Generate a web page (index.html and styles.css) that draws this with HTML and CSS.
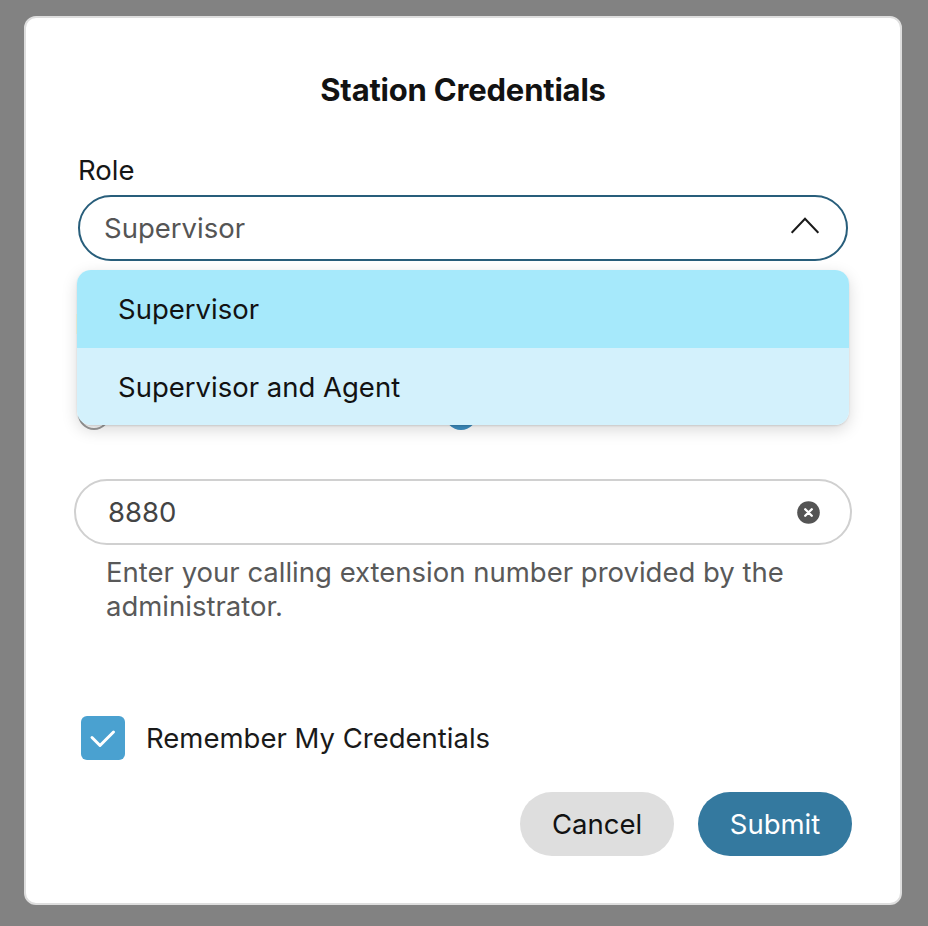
FILE: index.html
```html
<!DOCTYPE html>
<html lang="en">
<head>
<meta charset="utf-8">
<title>Station Credentials</title>
<link rel="stylesheet" href="styles.css">
</head>
<body>
<div class="dialog">
  <h1 class="title">Station Credentials</h1>

  <div class="field role-field">
    <div class="label">Role</div>
    <div class="select">
      <span class="select-value">Supervisor</span>
      <svg class="chevron" width="28" height="17" viewBox="0 0 28 17"><path d="M0.7 15.8 L14 1.8 L27.3 15.8" fill="none" stroke="#1a1a1a" stroke-width="2"/></svg>
    </div>
    <ul class="menu">
      <li class="menu-item active">Supervisor</li>
      <li class="menu-item">Supervisor and Agent</li>
    </ul>
  </div>

  <div class="label second-label">Login Option</div>
  <div class="radios">
    <label class="radio"><span class="radio-dot"></span><span class="radio-text">Dial Number</span></label>
    <label class="radio"><span class="radio-dot checked"></span><span class="radio-text">Extension</span></label>
  </div>

  <div class="input">
    <span class="input-value">8880</span>
    <svg class="clear" width="23" height="23" viewBox="0 0 24 24"><circle cx="12" cy="12" r="11.8" fill="#545454"/><path d="M8.6 8.6 L15.4 15.4 M15.4 8.6 L8.6 15.4" stroke="#fff" stroke-width="2.5" stroke-linecap="round"/></svg>
  </div>
  <p class="helper">Enter your calling extension number provided by the administrator.</p>

  <div class="remember">
    <span class="checkbox"><svg width="44" height="44" viewBox="0 0 44 44"><path d="M11 21.5 L19 29.5 L32.5 16" fill="none" stroke="#fff" stroke-width="3" stroke-linecap="round" stroke-linejoin="round"/></svg></span>
    <span class="remember-text">Remember My Credentials</span>
  </div>

  <div class="actions">
    <button class="btn cancel">Cancel</button>
    <button class="btn submit">Submit</button>
  </div>
</div>
</body>
</html>
```

FILE: styles.css
```css
* { box-sizing: border-box; }
html, body { margin: 0; padding: 0; }
body {
  background: #828282;
  font-family: Inter, "Liberation Sans", Arial, sans-serif;
  width: 928px;
  height: 926px;
  overflow: hidden;
}
.dialog {
  margin: 16px 0 0 24px;
  width: 878px;
  height: 889px;
  background: #fff;
  border: 2px solid #dedede;
  border-radius: 12px;
  padding: 52px 48px 0 48px;
  display: flex;
  flex-direction: column;
}
.title {
  margin: 0;
  text-align: center;
  font-size: 31px;
  font-weight: 700;
  line-height: 40px;
  color: #121212;
  letter-spacing: -0.2px;
}
.field { position: relative; }
.role-field { margin-top: 42px; }
.label {
  font-size: 27.5px;
  line-height: 36px;
  color: #161616;
  padding-left: 4px;
}
.select {
  margin: 7px 4px 0 4px;
  height: 66px;
  border: 2px solid #285e7b;
  border-radius: 33px;
  display: flex;
  align-items: center;
  justify-content: space-between;
  padding: 0 27px 0 24px;
}
.select-value {
  font-size: 27.5px;
  color: #555;
}
.chevron { display: block; margin-top: -5px; }
.menu {
  position: absolute;
  left: 3px;
  right: 3px;
  top: 118px;
  margin: 0;
  padding: 0;
  list-style: none;
  border-radius: 14px;
  overflow: hidden;
  box-shadow: 0 5px 16px rgba(0,0,0,0.15), 0 1px 2px rgba(0,0,0,0.12);
  z-index: 5;
}
.menu-item {
  height: 78px;
  display: flex;
  align-items: center;
  padding-left: 41px;
  font-size: 27.5px;
  color: #121212;
  background: #d3f1fc;
}
.menu-item + .menu-item { height: 77px; }
.menu-item.active { background: #a6e9fb; }
.second-label { margin-top: 45px; padding-left: 1px; }
.radios {
  margin-top: 56px;
  display: flex;
  height: 32px;
  padding-left: 4px;
}
.radio {
  display: flex;
  align-items: center;
  gap: 16px;
  width: 367px;
}
.radio-dot {
  width: 32px;
  height: 32px;
  border-radius: 50%;
  border: 2px solid #9a9a9a;
  background: #fff;
}
.radio-dot.checked {
  border: 9px solid #3d8fc2;
  background: #fff;
}
.radio-text { font-size: 27.5px; color: #161616; }
.input {
  margin-top: 49px;
  height: 66px;
  border: 2px solid #d0d0d0;
  border-radius: 33px;
  display: flex;
  align-items: center;
  justify-content: space-between;
  padding: 0 30px 0 32px;
}
.input-value { font-size: 27.5px; color: #444; }
.clear { display: block; }
.helper {
  margin: 10px 0 0 0;
  padding: 0 40px 0 32px;
  font-size: 27.5px;
  line-height: 34px;
  color: #595959;
}
.remember {
  margin-top: 93px;
  display: flex;
  align-items: center;
  gap: 21px;
  padding-left: 7px;
}
.checkbox {
  width: 44px;
  height: 44px;
  border-radius: 6px;
  background: #4aa1d0;
  display: block;
}
.checkbox svg { display: block; }
.remember-text { font-size: 27.5px; color: #1a1a1a; }
.actions {
  margin-top: 32px;
  display: flex;
  justify-content: flex-end;
  gap: 24px;
}
.btn {
  width: 154px;
  height: 64px;
  border: none;
  border-radius: 32px;
  font-family: inherit;
  font-size: 27.5px;
  cursor: pointer;
}
.cancel { background: #dedede; color: #121212; }
.submit { background: #34799f; color: #fff; }
```
